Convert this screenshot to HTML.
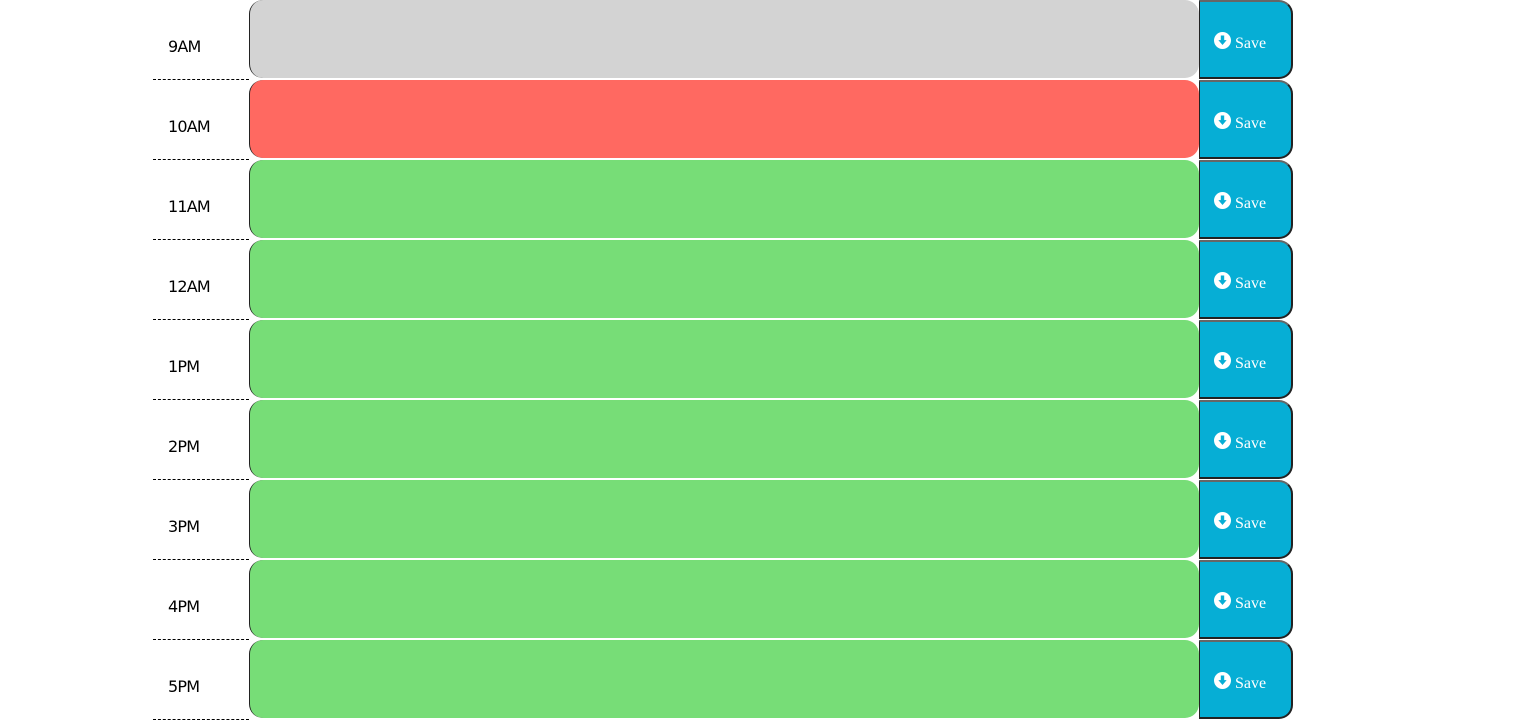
<!DOCTYPE html>
<html><head><style>
body{margin:0;background:#fff;width:1533px;height:718px;overflow:hidden;font-family:"DejaVu Sans","Liberation Sans",sans-serif}
.row{position:absolute;left:153px;height:80px;width:1141px}
.hour{position:absolute;left:0;top:0;width:96px;height:79px;border-bottom:1px dashed #000;font-size:16px;letter-spacing:-0.8px;color:#000}
.hour span{position:absolute;left:15px;top:37px}
.ta{position:absolute;left:96px;top:0;width:949px;height:78px;border-left:1px solid #222;border-radius:14px}
.btn{position:absolute;left:1046px;top:0;width:91px;height:75px;background:#06aed5;border:2px solid #222;border-left:1px solid #222;border-top:2px solid #666;border-radius:0 14px 14px 0;color:#fff;font-family:"Liberation Serif",serif;font-size:16px}
.btn .ic{position:absolute;left:14px;top:30px;width:17px;height:17px}
.btn .t{position:absolute;left:35px;top:33px}
</style></head><body>
<div id="c"></div>
<script>
var hrs=["9AM","10AM","11AM","12AM","1PM","2PM","3PM","4PM","5PM"];
var h="";
for(var i=0;i<9;i++){
var col=i==0?"#d3d3d3":i==1?"#ff6961":"#77dd77";
h+='<div class="row" style="top:'+(i*80)+'px"><div class="hour"><span>'+hrs[i]+'</span></div><div class="ta" style="background:'+col+'"></div><div class="btn"><svg class="ic" viewBox="0 0 16 16"><circle cx="8" cy="8" r="8" fill="#fff"/><path d="M6.4 3.3h3.2v4.4h2.3L8 12.2 4.1 7.7h2.3z" fill="#06aed5"/></svg><span class="t">Save</span></div></div>';
}
document.getElementById("c").innerHTML=h;
</script>
</body></html>
